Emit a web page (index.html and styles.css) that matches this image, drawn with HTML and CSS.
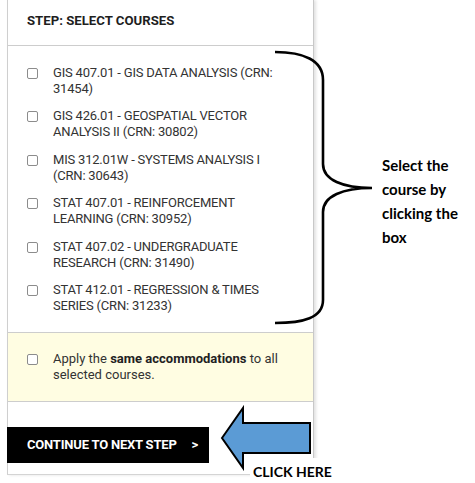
FILE: index.html
```html
<!DOCTYPE html>
<html lang="en">

<head>
    <meta charset="UTF-8">
    <meta name="viewport" content="width=device-width, initial-scale=1.0">
    <title>Select Courses</title>
    <link rel="stylesheet" href="styles.css">
</head>

<body>
    <div class="page">
        <div class="panel">
            <div class="panel-header">STEP: SELECT COURSES</div>

            <!-- Course list -->
            <ul class="course-list">
                <li><input type="checkbox"><span>GIS 407.01 - GIS DATA ANALYSIS (CRN: 31454)</span></li>
                <li><input type="checkbox"><span>GIS 426.01 - GEOSPATIAL VECTOR ANALYSIS II (CRN: 30802)</span></li>
                <li><input type="checkbox"><span>MIS 312.01W - SYSTEMS ANALYSIS I (CRN: 30643)</span></li>
                <li><input type="checkbox"><span>STAT 407.01 - REINFORCEMENT LEARNING (CRN: 30952)</span></li>
                <li><input type="checkbox"><span>STAT 407.02 - UNDERGRADUATE RESEARCH (CRN: 31490)</span></li>
                <li><input type="checkbox"><span>STAT 412.01 - REGRESSION &amp; TIMES SERIES (CRN: 31233)</span></li>
            </ul>

            <div class="same-box">
                <input type="checkbox">
                <p>Apply the <b>same accommodations</b> to all selected courses.</p>
            </div>

            <div class="panel-footer">
                <button class="next-btn">CONTINUE TO NEXT STEP <span class="chev">&gt;</span></button>
            </div>
        </div>

        <!-- Annotations -->
        <svg class="brace" width="110" height="280" viewBox="0 0 110 280">
            <path d="M2 4 C 30 4, 50 12, 50 32 L 50 116 C 50 132, 70 140, 99 140 C 70 140, 50 148, 50 164 L 50 252 C 50 270, 30 275, 2 275" fill="none" stroke="#000" stroke-width="2.6" />
        </svg>
        <div class="note">Select the<br>course by<br>clicking the<br>box</div>

        <svg class="arrow" width="94" height="66" viewBox="0 0 94 66">
            <polygon points="3,33 24,3 24,18 91,18 91,48 24,48 24,63" fill="#5b9bd5" stroke="#000" stroke-width="2" stroke-linejoin="miter" />
        </svg>
        <div class="click-here">CLICK HERE</div>
    </div>
</body>

</html>
```

FILE: styles.css
```css
body {
    margin: 0;
    background: #fff;
    font-family: Roboto, Arial, sans-serif;
}

.page {
    position: relative;
    width: 475px;
    height: 483px;
    overflow: hidden;
}

.panel {
    width: 307px;
    margin-left: 7px;
    box-sizing: border-box;
    border-left: 1px solid #cfcfcf;
    border-right: 1px solid #c8c8c8;
    border-bottom: 1px solid #d4d4d4;
    box-shadow: 2px 0 3px rgba(0, 0, 0, 0.12);
    background: #fff;
}

.panel-header {
    height: 45px;
    line-height: 42px;
    padding-left: 19px;
    font-size: 13.2px;
    font-weight: bold;
    letter-spacing: 0;
    color: #1e1e1e;
    border-bottom: 1px solid #cdcdcd;
}

.course-list {
    list-style: none;
    margin: 0;
    padding: 19px 20px 18px 19px;
}

.course-list li {
    display: flex;
    align-items: flex-start;
    font-size: 13px;
    line-height: 16px;
    letter-spacing: -0.2px;
    color: #333;
    margin-bottom: 11.4px;
}

.course-list li:last-child {
    margin-bottom: 0;
}

input[type="checkbox"] {
    appearance: none;
    -webkit-appearance: none;
    flex: none;
    width: 11px;
    height: 11px;
    margin: 3px 15px 0 0;
    border: 1px solid #8c8c8c;
    border-radius: 2px;
    background: #fff;
}

.same-box {
    display: flex;
    align-items: flex-start;
    background: #fffde2;
    border-top: 1px solid #cdcdcd;
    border-bottom: 1px solid #cdcdcd;
    padding: 18px 20px 18px 19px;
    font-size: 13px;
    line-height: 16px;
    color: #333;
}

.same-box p {
    margin: 0;
}

.same-box b {
    color: #222;
}

.panel-footer {
    padding: 25px 0 11px 0;
}

.next-btn {
    display: block;
    width: 202px;
    height: 36px;
    margin-left: -1px;
    padding: 0 0 0 20px;
    border: none;
    background: #000;
    color: #fff;
    text-align: left;
    font-family: Roboto, Arial, sans-serif;
    font-size: 13px;
    font-weight: bold;
    letter-spacing: -0.2px;
}

.chev {
    margin-left: 12px;
}

.brace {
    position: absolute;
    left: 273px;
    top: 48px;
}

.note {
    position: absolute;
    left: 382px;
    top: 153px;
    font-family: Lato, "Open Sans", sans-serif;
    font-weight: bold;
    font-size: 15px;
    line-height: 24px;
    color: #000;
}

.arrow {
    position: absolute;
    left: 219px;
    top: 405px;
}

.click-here {
    position: absolute;
    left: 250px;
    top: 458px;
    width: 84px;
    height: 25px;
    background: #fff;
    padding-left: 3px;
    box-sizing: border-box;
    font-family: Lato, "Open Sans", sans-serif;
    font-weight: bold;
    font-size: 14px;
    line-height: 27px;
    color: #000;
}
```
